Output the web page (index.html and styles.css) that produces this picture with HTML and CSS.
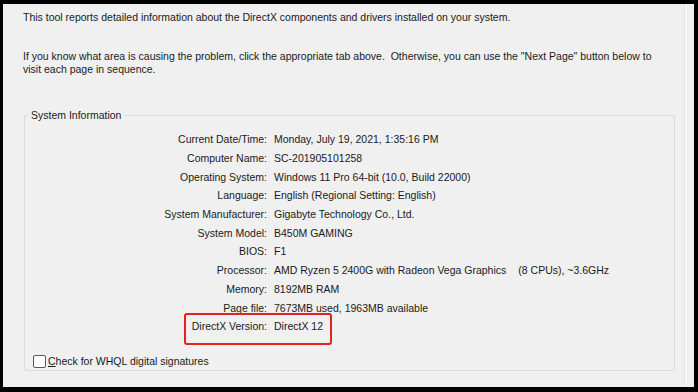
FILE: index.html
```html
<!DOCTYPE html>
<html>
<head>
<meta charset="utf-8">
<link rel="stylesheet" href="styles.css">
</head>
<body>
<div class="window">
  <div class="panel">
    <p class="intro first">This tool reports detailed information about the DirectX components and drivers installed on your system.</p>
    <p class="intro second">If you know what area is causing the problem, click the appropriate tab above.&nbsp; Otherwise, you can use the "Next Page" button below to<br>visit each page in sequence.</p>
    <fieldset class="group">
      <legend class="group-title">System Information</legend>
      <div class="info">
        <div class="label">Current Date/Time:</div><div class="value">Monday, July 19, 2021, 1:35:16 PM</div>
        <div class="label">Computer Name:</div><div class="value">SC-201905101258</div>
        <div class="label">Operating System:</div><div class="value">Windows 11 Pro 64-bit (10.0, Build 22000)</div>
        <div class="label">Language:</div><div class="value">English (Regional Setting: English)</div>
        <div class="label">System Manufacturer:</div><div class="value">Gigabyte Technology Co., Ltd.</div>
        <div class="label">System Model:</div><div class="value">B450M GAMING</div>
        <div class="label">BIOS:</div><div class="value">F1</div>
        <div class="label">Processor:</div><div class="value">AMD Ryzen 5 2400G with Radeon Vega Graphics<span class="gap"></span>(8 CPUs), ~3.6GHz</div>
        <div class="label">Memory:</div><div class="value">8192MB RAM</div>
        <div class="label">Page file:</div><div class="value">7673MB used, 1963MB available</div>
        <div class="label">DirectX Version:</div><div class="value">DirectX 12</div>
      </div>
      <div class="highlight"></div>
      <label class="check">
        <span class="box"></span>
        <span class="check-text"><u>C</u>heck for WHQL digital signatures</span>
      </label>
    </fieldset>
  </div>
  <div class="edge"></div>
</div>
</body>
</html>
```
FILE: styles.css
```css
html, body {
  margin: 0;
  padding: 0;
  background: #000;
}
body {
  width: 698px;
  height: 392px;
  overflow: hidden;
  font-family: "Liberation Sans", Arial, sans-serif;
  font-size: 10.5px;
  color: #1a1a1a;
}
.window {
  margin: 4px 0 0 3px;
  width: 691px;
  height: 383px;
  background: #f0f0f0;
  display: flex;
  position: relative;
}
.panel {
  flex: 1;
  padding: 7px 0 0 20px;
  display: flex;
  flex-direction: column;
}
.edge {
  width: 9px;
  border-left: 1px solid #e4e4e4;
  box-shadow: inset 2px 0 0 #f8f8f8;
}
.intro {
  margin: 0;
  line-height: 13px;
}
.second {
  margin-top: 26px;
}
.group {
  margin: 33px 0 0 1px;
  width: 651px;
  height: 262px;
  box-sizing: border-box;
  border: 1px solid #dadada;
  border-radius: 2px;
  padding: 8px 0 0 0;
  position: relative;
  min-width: 0;
}
.group-title {
  padding: 0 3px;
  margin-left: 3px;
  line-height: 13px;
}
.info {
  display: grid;
  grid-template-columns: 242px auto;
  column-gap: 7px;
  grid-auto-rows: 18.7px;
  align-items: center;
}
.label {
  text-align: right;
}
.value {
  white-space: nowrap;
}
.gap {
  display: inline-block;
  width: 12px;
}
.highlight {
  position: absolute;
  left: 159px;
  top: 191px;
  width: 148px;
  height: 32px;
  box-sizing: border-box;
  border: 2px solid #e3221c;
  border-radius: 3px;
}
.check {
  display: flex;
  align-items: center;
  gap: 2px;
  margin: 19px 0 0 8px;
  line-height: 13px;
}
.box {
  width: 11px;
  height: 11px;
  border: 1px solid #5a5a5a;
  border-radius: 2px;
  background: #fff;
}
.check-text u {
  text-decoration: underline;
}
```
